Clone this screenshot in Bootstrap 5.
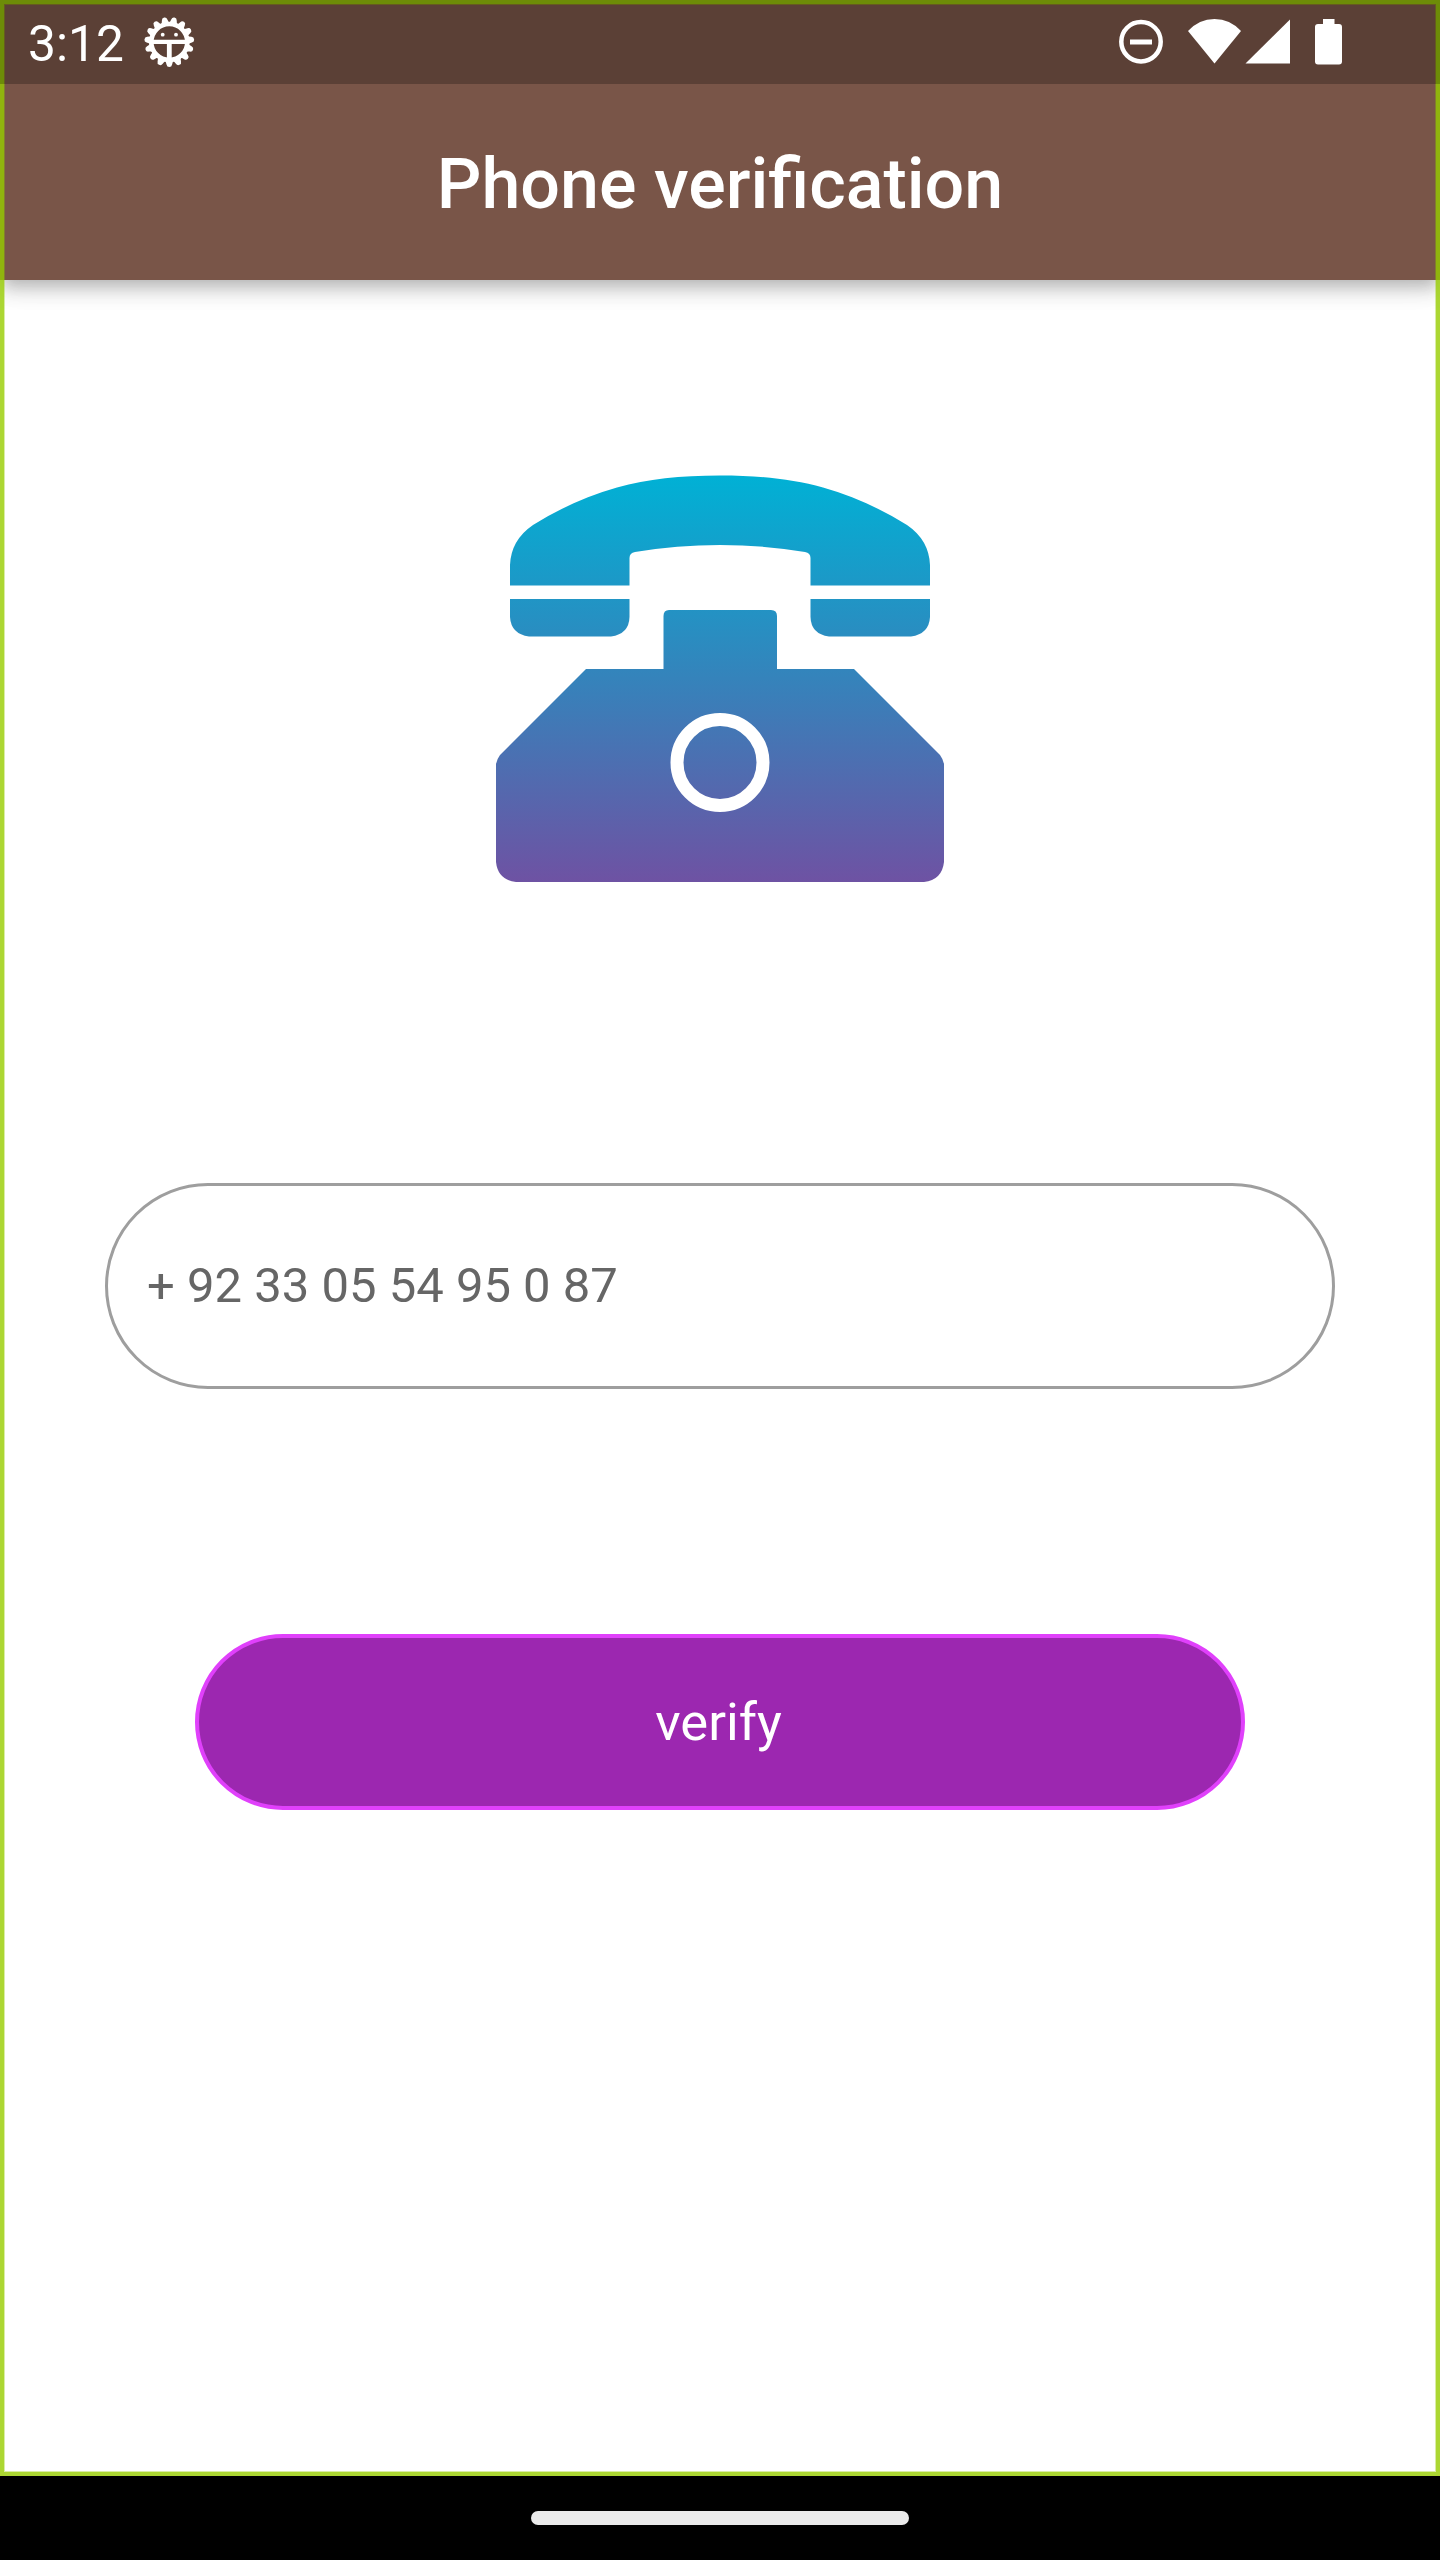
<!DOCTYPE html>
<html lang="en">
<head>
<meta charset="utf-8">
<meta name="viewport" content="width=device-width, initial-scale=1">
<title>Phone verification</title>
<link href="https://cdn.jsdelivr.net/npm/bootstrap@5.3.0/dist/css/bootstrap.min.css" rel="stylesheet">
<style>
body{font-family:Roboto,sans-serif;background:#fff}
.screen{width:1440px;height:2560px}
.status-bar{height:84px;background:#5b4036;padding:0 97px 0 28px;z-index:4;box-shadow:inset 0 4px #6d8c08,inset 4px 0 #6d8c08,inset -4px 0 #6d8c08,inset 0 5px #655c1f,inset 5px 0 #655c1f,inset -5px 0 #655c1f}
.clock{width:96px;font-size:49.7px;line-height:80px;padding-top:4px}
.app-bar{height:196px;padding-top:3px;background:#795548;box-shadow:0 7px 14px -3.5px rgba(0,0,0,.18),0 14px 17.5px rgba(0,0,0,.11),0 3.5px 35px rgba(0,0,0,.06);z-index:1}
.app-title{font-size:70px;line-height:82px;font-weight:500}
.content{padding:195px 105px 0}
.phone-input,.phone-input:focus{height:206px;margin-top:301px;border:3px solid #9e9e9e;border-radius:103px;padding:0 39px 2px;font-size:49px;color:#666;box-shadow:none}
.phone-input::placeholder{color:#666;opacity:1}
.verify-btn,.verify-btn:hover{width:1050px;height:176px;margin-top:245px;background:#9c27b0;border:4px solid #e040fb;border-radius:88px;padding:0 3px 0 0;font-size:52.5px;color:#fff}
.nav-area{height:84px}
.nav-handle{width:378px;height:14px;border-radius:7px;background:#ebebeb}
.frame{height:2476px;box-shadow:inset 0 0 0 4px rgba(150,204,0,.69),inset 0 0 0 5px rgba(150,204,0,.35);pointer-events:none;z-index:3}
</style>
</head>
<body>
<div class="screen d-flex flex-column position-relative overflow-hidden">
  <header class="status-bar d-flex align-items-center justify-content-between text-white position-relative">
    <div class="d-flex align-items-center">
      <span class="clock">3:12</span>
      <svg class="ms-3" width="60" height="84" viewBox="140 0 60 84" fill="#fff">
        <defs><path id="tooth" d="M-4.500 18.500Q-3.200 20-2.800 22.500Q-2.400 25 0 25T2.800 22.500Q3.200 20 4.500 18.500z"/></defs>
        <g transform="translate(169.300 42)">
          <circle r="18" fill="none" stroke="#fff" stroke-width="4.600"/>
          <use href="#tooth"/><use href="#tooth" transform="rotate(24)"/><use href="#tooth" transform="rotate(48)"/><use href="#tooth" transform="rotate(72)"/><use href="#tooth" transform="rotate(96)"/><use href="#tooth" transform="rotate(120)"/><use href="#tooth" transform="rotate(144)"/><use href="#tooth" transform="rotate(168)"/><use href="#tooth" transform="rotate(192)"/><use href="#tooth" transform="rotate(216)"/><use href="#tooth" transform="rotate(240)"/><use href="#tooth" transform="rotate(264)"/><use href="#tooth" transform="rotate(288)"/><use href="#tooth" transform="rotate(312)"/><use href="#tooth" transform="rotate(336)"/>
          <path d="M-17-2.200H17V2.100H2.400V17H-2.400V2.100H-17z"/>
          <circle cx="-6.600" cy="-7.300" r="1.900"/><circle cx="6.700" cy="-7.300" r="1.900"/>
        </g>
      </svg>
    </div>
    <svg width="230" height="84" viewBox="1113 0 230 84" fill="#fff">
      <circle cx="1141" cy="41.700" r="19.700" fill="none" stroke="#fff" stroke-width="4.500"/>
      <path d="M1130 39.500h22v5h-22z"/>
      <path d="M1188 31Q1199 19 1214.500 19T1241 31L1214.500 63.500z"/>
      <path d="M1290 19.500V63.500H1245.500z"/>
      <path d="M1323 19h11.500v5h4.500q3 0 3 3v34.500q0 3-3 3h-21q-3 0-3-3V27q0-3 3-3h5z"/>
    </svg>
  </header>
  <nav class="app-bar d-flex align-items-center justify-content-center text-white">
    <h1 class="app-title m-0">Phone verification</h1>
  </nav>
  <main class="content flex-grow-1 d-flex flex-column align-items-center">
    <svg width="448" height="407" viewBox="496 475 448 407" fill="url(#g)">
      <defs><linearGradient id="g" gradientUnits="userSpaceOnUse" x1="0" y1="475" x2="0" y2="882"><stop offset="0" stop-color="#00b1d5"/><stop offset=".5" stop-color="#3583bb"/><stop offset="1" stop-color="#6e52a3"/></linearGradient></defs>
      <path d="M510 585.500V565Q511 540 533 525C560 508 588 496 617 487.500C648 479 680 475.500 720 475.500S792 479 823 487.500C852 496 880 508 907 525Q929 540 930 565V585.500H810.500V558Q810.500 553 805 552Q763 545 720 545T635 552Q629.500 553 629.500 558V585.500z"/>
      <path d="M510 599H629.500V617Q629 634 611 636.500H529Q511 634 510 617z"/>
      <path d="M810.500 599H930V617Q929 634 911 636.500H829Q811 634 810.500 617z"/>
      <path d="M586 669H663.500V616Q663.500 610 669 610H771Q777 610 777 616V669H854L940 755Q943 759 944 764V862Q942 880 924 882H516Q498 880 496 862V764Q497 759 500 755z"/>
      <circle cx="720" cy="762.500" r="43" fill="none" stroke="#fff" stroke-width="13"/>
    </svg>
    <input class="form-control phone-input" type="text" placeholder="+ 92 33 05 54 95 0 87">
    <button class="btn verify-btn" type="button">verify</button>
  </main>
  <footer class="nav-area bg-black d-flex align-items-center justify-content-center"><div class="nav-handle"></div></footer>
  <div class="frame position-absolute top-0 start-0 w-100"></div>
</div>
<script src="https://cdn.jsdelivr.net/npm/bootstrap@5.3.0/dist/js/bootstrap.bundle.min.js"></script>
</body>
</html>
